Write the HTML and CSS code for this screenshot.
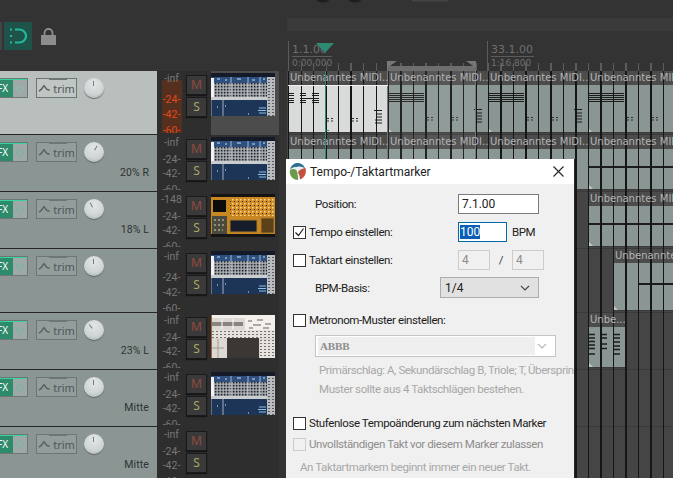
FILE: index.html
```html
<!DOCTYPE html>
<html lang="de">
<head>
    <meta charset="UTF-8">
    <meta name="viewport" content="width=device-width, initial-scale=1.0">
    <title>Tempo-/Taktartmarker</title>
    <link rel="stylesheet" href="styles.css">
</head>
<body>
    <!-- Shared drawings -->
    <svg class="defs" aria-hidden="true">
        <defs>
            <pattern id="dots" width="3" height="3" patternUnits="userSpaceOnUse">
                <rect width="3" height="3" fill="#aeb3b8"/>
                <rect x=".8" y=".8" width="1.700" height="1.700" fill="#1e2127"/>
            </pattern>
            <pattern id="side" width="4" height="3" patternUnits="userSpaceOnUse">
                <rect width="4" height="3" fill="#b9bdc0"/>
                <rect x="1" width="2" height="1" fill="#555a62"/>
            </pattern>
            <pattern id="gold" width="4" height="4" patternUnits="userSpaceOnUse">
                <rect width="4" height="4" fill="#cf8a24"/>
                <rect x="1" y="1" width="1.500" height="1.500" fill="#f5dfa8"/>
                <rect x="3" y="3" width="1" height="1" fill="#4a300c"/>
            </pattern>
            <pattern id="pale" width="4" height="3" patternUnits="userSpaceOnUse">
                <rect width="4" height="3" fill="#e6e2de"/>
                <rect x="1" y="1" width="2" height="1" fill="#77716e"/>
            </pattern>
            <symbol id="rack" viewBox="0 0 64 43">
                <rect width="64" height="43" fill="#1d3557"/>
                <rect width="64" height="4" fill="#141a28"/>
                <rect y="4" width="64" height="6" fill="#2d5080"/>
                <path d="M6 6h3M14 7h2M26 6h4M41 7h3M52 6h2" stroke="#cfe0f0"/>
                <rect y="10" width="56" height="14" fill="url(#dots)"/>
                <rect y="5" width="3" height="20" fill="#f2f2f2"/>
                <path d="M20 4v21M37 4v21M49 4v21" stroke="#dfe5ec" stroke-width=".7"/>
                <rect y="24" width="64" height="3" fill="#c9cdd0"/>
                <rect x="56" y="4" width="8" height="39" fill="url(#side)"/>
                <path d="M0 27v16M12 27v16" stroke="#c5ced8" stroke-width=".8"/>
                <path d="M48 35h7M47 37.500h8M48 40h7" stroke="#8fc1e8"/>
                <path d="M6 34h1M37 41h1M14 33h1" stroke="#e6edf3"/>
            </symbol>
            <symbol id="amber" viewBox="0 0 64 43">
                <rect width="64" height="43" fill="#141414"/>
                <rect y="3" width="64" height="37" fill="#c98722"/>
                <rect x="19" y="4" width="44" height="18" fill="url(#gold)"/>
                <rect x="2" y="6" width="13" height="12" fill="#0c0c0c"/>
                <rect x="1" y="22" width="15" height="18" fill="#4a4a3e"/>
                <path d="M3 26h10M3 31h11M3 36h9" stroke="#e0d3a8" stroke-dasharray="2 2"/>
                <rect x="19" y="26" width="27" height="12" fill="#161c2a" stroke="#a87a2c"/>
                <rect x="50" y="24" width="13" height="15" fill="#5c4018" stroke="#a87a2c"/>
            </symbol>
            <symbol id="paper" viewBox="0 0 64 43">
                <rect width="64" height="43" fill="#dcd8d4"/>
                <rect width="64" height="3" fill="#f3f0ec"/>
                <rect y="7" width="32" height="4" fill="#8a8480"/>
                <path d="M11 4v10M22 4v10" stroke="#fff"/>
                <rect x="34" y="3" width="30" height="14" fill="#f3f0ec"/>
                <path d="M37 6h4M46 5h6M42 10h8M54 9h6M38 13h4M52 13h6" stroke="#66605c"/>
                <rect y="15" width="64" height="8" fill="url(#pale)"/>
                <rect x="16" y="23" width="32" height="20" fill="#3a3735"/>
                <path d="M7 24v19M1 33h12" stroke="#a49c96"/>
                <rect x="49" y="25" width="15" height="18" fill="url(#pale)"/>
                <rect width="1" height="43" fill="#b0602c"/>
            </symbol>
            <symbol id="power" viewBox="0 0 12 12">
                <path d="M3.600 3.500a4 4 0 1 0 4.800 0M6 1.500v4.500" fill="none" stroke-width="1.200"/>
            </symbol>
            <symbol id="notes-first" viewBox="0 0 100 48">
                <path d="M0 7.500h6M0 9.500h6M0 12.500h6M0 14.500h6M0 16.500h6M12 7.500h6M12 9.500h6M12 12.500h12M12 14.500h6M12 16.500h6M24 7.500h7M24 9.500h7M24 12.500h7M24 14.500h7M24 16.500h7" stroke="#1c1c1c"/>
                <path d="M39 32.500h2M43 32.500h2M39 35h2M43 35h2M64 32.500h2M68 32.500h2M64 35h2M68 35h2" stroke="#333" stroke-width="1.200"/>
                <path d="M86 24.500h8M88 28h6M88 31h6M87 34h7M87 37h7" stroke="#1c1c1c"/>
            </symbol>
            <symbol id="notes-rest" viewBox="0 0 100 48">
                <path d="M0 8.500h36M0 10.500h36M0 12.500h36M0 14.500h36M0 16.500h36" stroke="#1c1c1c"/>
                <path d="M39 32.500h2M43 32.500h2M39 35h2M43 35h2M64 32.500h2M68 32.500h2M64 35h2M68 35h2" stroke="#333" stroke-width="1.200"/>
                <path d="M86 24.500h8M88 28h6M88 31h6M87 34h7M87 37h7" stroke="#1c1c1c"/>
            </symbol>
            <symbol id="notes-short" viewBox="0 0 37 40">
                <path d="M0 7.500h7M0 11h7M0 14.500h7M0 18h7M0 21.500h7M0 27h7M13 7.500h6M13 11h6M13 17h6M13 21.500h6M26 7.500h6M26 11h6M26 15h6M26 19h6M26 22.500h6M25 27h7" stroke="#1c1c1c" stroke-width="1.300"/>
            </symbol>
        </defs>
    </svg>

    <div class="top">
        <div class="tools">
            <div class="tool-edge"></div>
            <div class="snap">
                <svg width="18" height="18" viewBox="0 0 18 18">
                    <path d="M6 2.500h4.500a6.500 6.500 0 0 1 0 13H6" fill="none" stroke="#22b89a" stroke-width="2.200"/>
                    <path d="M1 2.500h2M1 9h2M1 15.500h2" stroke="#22b89a" stroke-width="2.200"/>
                </svg>
            </div>
            <svg class="lock" width="15" height="17" viewBox="0 0 15 17">
                <path d="M3.500 8V5a4 4 0 0 1 8 0v3" fill="none" stroke="#8d8d8d" stroke-width="1.800"/>
                <rect y="7" width="15" height="10" fill="#8d8d8d"/>
            </svg>
        </div>
        <div class="ruler">
            <svg class="scraps" width="170" height="4" viewBox="0 0 170 4">
                <ellipse cx="36" cy="0" rx="6" ry="2.500" fill="#1e1e1e"/>
                <ellipse cx="68" cy="0" rx="6" ry="2.500" fill="#1e1e1e"/>
                <rect x="125" width="36" height="1.500" fill="#454545"/>
            </svg>
            <div class="ruler-band"></div>
            <div class="ruler-ticks"></div>
            <div class="bar-mark bar-first"><span class="bar-num">1.1.00</span><span class="bar-time">0:00.000</span></div>
            <div class="bar-mark bar-next"><span class="bar-num">33.1.00</span><span class="bar-time">1:16.800</span></div>
            <div class="loop"></div>
            <svg class="playhead-top" width="18" height="10" viewBox="0 0 18 10"><path d="M0 0h18l-9 10z" fill="#2e8a72"/></svg>
        </div>
    </div>

    <div class="main">
        <div class="tracks">
            <div class="track tall">
                <div class="panel selected">
                    <div class="controls">
                        <div class="fx"><span class="fx-label">FX</span><span class="fx-power"><svg width="10" height="10"><use href="#power"/></svg></span></div>
                        <div class="trim"><svg width="13" height="10" viewBox="0 0 14 10"><path d="M1 8.500l2.500-2 3-4 3 4 3 1" fill="none" stroke="#5a5f5f" stroke-width="1.600"/></svg><span>trim</span></div>
                        <div class="knob"></div>
                    </div>
                </div>
                <div class="meter hot"><span>-inf</span><span class="m24">-24-</span><span>-42-</span><span>-60-</span></div>
                <div class="buttons"><div class="mute">M</div><div class="solo">S</div></div>
                <div class="thumb thumb-active"><svg width="64" height="43"><use href="#rack"/></svg></div>
            </div>
            <div class="track">
                <div class="panel">
                    <div class="controls">
                        <div class="fx"><span class="fx-label">FX</span><span class="fx-power"><svg width="10" height="10"><use href="#power"/></svg></span></div>
                        <div class="trim"><svg width="13" height="10" viewBox="0 0 14 10"><path d="M1 8.500l2.500-2 3-4 3 4 3 1" fill="none" stroke="#5a5f5f" stroke-width="1.600"/></svg><span>trim</span></div>
                        <div class="knob knob-r20"></div>
                    </div>
                    <div class="pan">20% R</div>
                </div>
                <div class="meter"><span>-inf</span><span class="m24">-24-</span><span>-42-</span><span>-60-</span></div>
                <div class="buttons"><div class="mute">M</div><div class="solo">S</div></div>
                <div class="thumb"><svg width="64" height="43"><use href="#rack"/></svg></div>
            </div>
            <div class="track">
                <div class="panel">
                    <div class="controls">
                        <div class="fx"><span class="fx-label">FX</span><span class="fx-power"><svg width="10" height="10"><use href="#power"/></svg></span></div>
                        <div class="trim"><svg width="13" height="10" viewBox="0 0 14 10"><path d="M1 8.500l2.500-2 3-4 3 4 3 1" fill="none" stroke="#5a5f5f" stroke-width="1.600"/></svg><span>trim</span></div>
                        <div class="knob knob-l18"></div>
                    </div>
                    <div class="pan">18% L</div>
                </div>
                <div class="meter"><span>-148</span><span class="m24">-24-</span><span>-42-</span><span>-60-</span></div>
                <div class="buttons"><div class="mute">M</div><div class="solo">S</div></div>
                <div class="thumb"><svg width="64" height="43"><use href="#amber"/></svg></div>
            </div>
            <div class="track tall">
                <div class="panel">
                    <div class="controls">
                        <div class="fx"><span class="fx-label">FX</span><span class="fx-power"><svg width="10" height="10"><use href="#power"/></svg></span></div>
                        <div class="trim"><svg width="13" height="10" viewBox="0 0 14 10"><path d="M1 8.500l2.500-2 3-4 3 4 3 1" fill="none" stroke="#5a5f5f" stroke-width="1.600"/></svg><span>trim</span></div>
                        <div class="knob"></div>
                    </div>
                </div>
                <div class="meter"><span>-inf</span><span class="m24">-24-</span><span>-42-</span><span>-60-</span></div>
                <div class="buttons"><div class="mute">M</div><div class="solo">S</div></div>
                <div class="thumb"><svg width="64" height="43"><use href="#rack"/></svg></div>
            </div>
            <div class="track">
                <div class="panel">
                    <div class="controls">
                        <div class="fx"><span class="fx-label">FX</span><span class="fx-power"><svg width="10" height="10"><use href="#power"/></svg></span></div>
                        <div class="trim"><svg width="13" height="10" viewBox="0 0 14 10"><path d="M1 8.500l2.500-2 3-4 3 4 3 1" fill="none" stroke="#5a5f5f" stroke-width="1.600"/></svg><span>trim</span></div>
                        <div class="knob knob-l23"></div>
                    </div>
                    <div class="pan">23% L</div>
                </div>
                <div class="meter"><span>-inf</span><span class="m24">-24-</span><span>-42-</span><span>-60-</span></div>
                <div class="buttons"><div class="mute">M</div><div class="solo">S</div></div>
                <div class="thumb"><svg width="64" height="43"><use href="#paper"/></svg></div>
            </div>
            <div class="track">
                <div class="panel">
                    <div class="controls">
                        <div class="fx"><span class="fx-label">FX</span><span class="fx-power"><svg width="10" height="10"><use href="#power"/></svg></span></div>
                        <div class="trim"><svg width="13" height="10" viewBox="0 0 14 10"><path d="M1 8.500l2.500-2 3-4 3 4 3 1" fill="none" stroke="#5a5f5f" stroke-width="1.600"/></svg><span>trim</span></div>
                        <div class="knob"></div>
                    </div>
                    <div class="pan">Mitte</div>
                </div>
                <div class="meter"><span>-inf</span><span class="m24">-24-</span><span>-42-</span><span>-60-</span></div>
                <div class="buttons"><div class="mute">M</div><div class="solo">S</div></div>
                <div class="thumb"><svg width="64" height="43"><use href="#rack"/></svg></div>
            </div>
            <div class="track">
                <div class="panel">
                    <div class="controls">
                        <div class="fx"><span class="fx-label">FX</span><span class="fx-power"><svg width="10" height="10"><use href="#power"/></svg></span></div>
                        <div class="trim"><svg width="13" height="10" viewBox="0 0 14 10"><path d="M1 8.500l2.500-2 3-4 3 4 3 1" fill="none" stroke="#5a5f5f" stroke-width="1.600"/></svg><span>trim</span></div>
                        <div class="knob"></div>
                    </div>
                    <div class="pan">Mitte</div>
                </div>
                <div class="meter"><span>-inf</span><span class="m24">-24-</span><span>-42-</span><span>-60-</span></div>
                <div class="buttons"><div class="mute">M</div><div class="solo">S</div></div>
                <div class="thumb"></div>
            </div>
        </div>

        <!-- Arrange view: items sit on the timeline -->
        <div class="arrange">
            <div class="lane tall">
                <div class="item item-1 picked"><div class="item-title">Unbenanntes MIDI...</div><div class="item-body"><svg width="100" height="48"><use href="#notes-first"/></svg></div></div>
                <div class="item item-2"><div class="item-title">Unbenanntes MIDI...</div><div class="item-body"><svg width="100" height="48"><use href="#notes-rest"/></svg></div></div>
                <div class="item item-3"><div class="item-title">Unbenanntes MIDI...</div><div class="item-body"><svg width="100" height="48"><use href="#notes-rest"/></svg></div></div>
                <div class="item item-4"><div class="item-title">Unbenanntes MIDI...</div><div class="item-body"><svg width="100" height="48"><use href="#notes-rest"/></svg></div></div>
            </div>
            <div class="lane">
                <div class="item item-1"><div class="item-title">Unbenanntes MIDI...</div><div class="item-body"></div></div>
                <div class="item item-2"><div class="item-title">Unbenanntes MIDI...</div><div class="item-body"></div></div>
                <div class="item item-3"><div class="item-title">Unbenanntes MIDI...</div><div class="item-body"></div></div>
                <div class="item item-4"><div class="item-title">Unbenanntes MIDI...</div><div class="item-body"><div class="held held-2"></div></div></div>
            </div>
            <div class="lane">
                <div class="item item-4"><div class="item-title">Unbenanntes MIDI...</div><div class="item-body"><div class="held held-3"></div></div></div>
            </div>
            <div class="lane tall">
                <div class="item item-5"><div class="item-title">Unbenanntes MIDI...</div><div class="item-body"><div class="held held-4"></div></div></div>
            </div>
            <div class="lane">
                <div class="item item-6"><div class="item-title">Unbe...</div><div class="item-body"><svg width="37" height="40"><use href="#notes-short"/></svg></div></div>
            </div>
            <div class="lane"></div>
            <div class="lane"></div>
            <div class="beat-lines"></div>
            <div class="time-selection"></div>
            <div class="playhead"></div>
        </div>
    </div>

    <div class="dialog">
        <div class="dialog-title">
            <svg class="logo" width="17" height="17" viewBox="0 0 17 17">
                <circle cx="8.500" cy="8.500" r="8.500" fill="#e9eef0"/>
                <path d="M1 6.500C2.500 1.500 6 0 8.500 0s6.500 1.500 7.800 6C13.500 3.500 10 3 8 4 5 4 3 4.500 1 6.500z" fill="#2d6f8c"/>
                <path d="M1 7c2.500-1.500 5-1.500 6.500.5 1 2 1.500 5.500 1.500 9.500-4 0-7.500-3-8-7z" fill="#6b9a4a"/>
                <path d="M9 9.500c.5-2 3-4 7.500-4.500.800 4 .5 9-5.500 11.500 0-2-.5-5-2-7z" fill="#c2503c"/>
            </svg>
            <span class="title-text">Tempo-/Taktartmarker</span>
            <svg class="close" width="11" height="11" viewBox="0 0 11 11"><path d="M.5.500l10 10M10.500.500l-10 10" stroke="#222" stroke-width="1.100"/></svg>
        </div>
        <div class="dialog-body">
            <div class="row row-position">
                <span class="label label-plain wide">Position:</span>
                <div class="field field-wide">7.1.00</div>
            </div>
            <div class="row row-tempo">
                <span class="check checked"><svg width="11" height="11" viewBox="0 0 11 11"><path d="M1.500 5.500l3 3 5-7" fill="none" stroke="#222" stroke-width="1.200"/></svg></span>
                <span class="label wide-check">Tempo einstellen:</span>
                <div class="field field-tempo"><span class="selection">100</span></div>
                <span class="unit">BPM</span>
            </div>
            <div class="row row-meter">
                <span class="check"></span>
                <span class="label wide-check">Taktart einstellen:</span>
                <div class="field field-small off">4</div>
                <span class="slash">/</span>
                <div class="field field-small off">4</div>
            </div>
            <div class="row row-base">
                <span class="label label-plain narrow">BPM-Basis:</span>
                <div class="select">1/4<svg width="10" height="6" viewBox="0 0 10 6"><path d="M1 1l4 4 4-4" fill="none" stroke="#444" stroke-width="1.100"/></svg></div>
            </div>
            <div class="row row-pattern">
                <span class="check"></span>
                <span class="label">Metronom-Muster einstellen:</span>
            </div>
            <div class="combo">
                <span class="combo-text">ABBB</span>
                <svg width="10" height="6" viewBox="0 0 10 6"><path d="M1 1l4 4 4-4" fill="none" stroke="#b5b5b5" stroke-width="1.100"/></svg>
            </div>
            <div class="hint">Primärschlag: A, Sekundärschlag B, Triole; T, Überspringen: .</div>
            <div class="hint">Muster sollte aus 4 Taktschlägen bestehen.</div>
            <div class="row row-ramp">
                <span class="check"></span>
                <span class="label">Stufenlose Tempoänderung zum nächsten Marker</span>
            </div>
            <div class="row row-partial">
                <span class="check off"></span>
                <span class="label off-text">Unvollständigen Takt vor diesem Marker zulassen</span>
            </div>
            <div class="note">An Taktartmarkern beginnt immer ein neuer Takt.</div>
        </div>
    </div>
</body>
</html>
```

FILE: styles.css
```css
/* General */
body {
    margin: 0;
    width: 673px;
    height: 478px;
    overflow: hidden;
    position: relative;
    background-color: #333;
    font-family: "DejaVu Sans", sans-serif;
    color: #222;
}

.defs {
    position: absolute;
    width: 0;
    height: 0;
}

/* Top area */
.top {
    display: flex;
    height: 71px;
}

.tools {
    width: 287px;
    display: flex;
    align-items: flex-start;
    padding-top: 22px;
    box-sizing: border-box;
}

.tool-edge {
    width: 2px;
    height: 28px;
    background-color: #444;
    margin-right: 2px;
}

.snap {
    width: 28px;
    height: 28px;
    background-color: #1f5248;
    display: flex;
    justify-content: center;
    align-items: center;
}

.lock {
    margin: 6px 0 0 9px;
}

.ruler {
    flex: 1;
    position: relative;
}

.scraps {
    position: absolute;
    left: 0;
    top: 0;
}

.ruler-band {
    margin-top: 18px;
    height: 13px;
    background-color: #3a3a3a;
}

.ruler-ticks {
    position: absolute;
    left: 1px;
    right: 0;
    top: 63px;
    height: 8px;
    background: repeating-linear-gradient(90deg, #5c5c5c 0, #5c5c5c 1px, transparent 1px, transparent 12.5px);
}

.bar-mark {
    position: absolute;
    top: 41px;
    height: 30px;
    padding-left: 3px;
    border-left: 1px solid #5c5c5c;
    display: flex;
    flex-direction: column;
    color: #707070;
}

.bar-first { left: 1px; }
.bar-next { left: 200px; }

.bar-num {
    font-size: 11px;
    line-height: 13px;
    border-bottom: 1px solid #5c5c5c;
    padding-right: 1px;
    margin-top: 2px;
}

.bar-time {
    font-size: 9px;
    line-height: 13px;
}

.loop {
    position: absolute;
    left: 100px;
    top: 66px;
    width: 89px;
    height: 5px;
    background-color: #6e6e6e;
}

.loop::before,
.loop::after {
    content: "";
    position: absolute;
    top: -5px;
    width: 0;
    height: 0;
    border-top: 7px solid #777;
}

.loop::before {
    left: 0;
    border-right: 10px solid transparent;
}

.loop::after {
    right: 0;
    border-left: 10px solid transparent;
}

.playhead-top {
    position: absolute;
    left: 29px;
    top: 43px;
}

/* Main split */
.main {
    display: flex;
    height: 407px;
}

.tracks {
    width: 287px;
}

.track {
    display: flex;
    height: 57px;
}

.track.tall {
    height: 64px;
}

.panel {
    width: 157px;
    box-sizing: border-box;
    background-color: #8b9694;
    border-bottom: 1px solid #262626;
    overflow: hidden;
}

.panel.selected {
    background-color: #b8bfbd;
}

.controls {
    display: flex;
    padding-top: 7px;
}

/* FX button */
.fx {
    width: 28px;
    height: 20px;
    box-sizing: border-box;
    display: flex;
    border: 1px solid #6d7674;
    border-left: none;
}

.fx-label {
    width: 13px;
    background-color: #2d8a6b;
    box-shadow: inset 0 1px 0 #38d39f;
    color: #fff;
    font-family: "Noto Sans", sans-serif;
    font-size: 10px;
    line-height: 19px;
    text-indent: -3px;
    white-space: nowrap;
    overflow: hidden;
}

.fx-power {
    flex: 1;
    background-color: #9ea9a7;
    box-shadow: inset 0 1px 0 #38d39f;
    display: flex;
    justify-content: center;
    align-items: center;
}

.fx-power svg {
    stroke: #6fb8a2;
}

.selected .fx-power svg {
    stroke: #8fbfaf;
}

/* Trim button */
.trim {
    width: 41px;
    height: 20px;
    margin-left: 8px;
    box-sizing: border-box;
    border: 1px solid #6d7674;
    background-color: #939e9c;
    display: flex;
    align-items: center;
    justify-content: center;
    gap: 2px;
    font-family: "Noto Sans", sans-serif;
    font-size: 11px;
    color: #50565a;
    position: relative;
}

.trim::before {
    content: "";
    position: absolute;
    top: -1px;
    left: 12px;
    width: 18px;
    height: 2px;
    background-color: #6d7674;
}

.selected .trim {
    background-color: #bfc6c4;
}

/* Pan knob */
.knob {
    width: 20px;
    height: 20px;
    margin-left: 7px;
    border-radius: 50%;
    background: radial-gradient(circle at 50% 30%, #e2e6e6 0, #cfd4d4 60%, #a4aaa9 100%);
    box-shadow: 0 1px 1px #5f6665;
    position: relative;
}

.knob::after {
    content: "";
    position: absolute;
    left: 9px;
    top: 3px;
    width: 1px;
    height: 5px;
    background-color: #767b7b;
    transform-origin: 50% 7px;
}

.knob-r20::after { transform: rotate(30deg); }
.knob-l18::after { transform: rotate(-28deg); }
.knob-l23::after { transform: rotate(-38deg); }

.pan {
    margin-top: 4px;
    padding-right: 8px;
    text-align: right;
    font-family: "Roboto", sans-serif;
    font-size: 10.5px;
    letter-spacing: 0.1px;
    line-height: 14px;
    color: #2e3232;
}

/* Meter labels */
.meter {
    width: 29px;
    background-color: #2e2e2e;
    color: #777;
    font-family: "Roboto", sans-serif;
    font-size: 10.5px;
    text-align: center;
    overflow: hidden;
    display: flex;
    flex-direction: column;
    padding-top: 1px;
    box-sizing: border-box;
}

.meter span {
    line-height: 14px;
    height: 14px;
    flex-shrink: 0;
}

.meter .m24 {
    margin-top: 3px;
}

.meter span:last-child {
    margin-top: 2px;
    height: 7px;
    overflow: hidden;
}

.tall .meter .m24 {
    margin-top: 7px;
}

.tall .meter span:nth-child(3) {
    margin-top: 1px;
}

.tall .meter span:last-child {
    height: 9px;
}

.meter.hot {
    color: #e0491b;
    background:
        linear-gradient(#56301f, #56301f) 5px 9px / 20px 53px no-repeat,
        #2e2e2e;
}

.meter.hot span:first-child {
    color: #777;
}

/* Mute and solo */
.buttons {
    width: 25px;
    background-color: #2e2e2e;
    padding-top: 4px;
    box-sizing: border-box;
}

.mute,
.solo {
    width: 21px;
    height: 20px;
    box-sizing: border-box;
    border: 1px solid #1a1a1a;
    background-color: #3a3a3a;
    box-shadow: 0 1px 1px #161616;
    text-align: center;
    font-family: "Noto Sans", sans-serif;
    font-size: 12px;
    line-height: 18px;
}

.mute {
    color: #8f4a40;
}

.solo {
    margin-top: 2px;
    color: #a8a860;
}

/* FX thumbnails */
.thumb {
    width: 68px;
    background-color: #2e2e2e;
    padding: 2px 0 0 0;
    box-sizing: border-box;
    line-height: 0;
}

.thumb-active {
    background-color: #4c4c4c;
}

/* Arrange view */
.arrange {
    flex: 1;
    position: relative;
    background-color: #454545;
    overflow: hidden;
}

.lane {
    height: 57px;
    position: relative;
    box-sizing: border-box;
    border-bottom: 1px solid #3a3a3a;
}

.lane.tall {
    height: 64px;
}

.item {
    position: absolute;
    top: 0;
    bottom: 1px;
    display: flex;
    flex-direction: column;
    overflow: hidden;
    background-color: #4c4c4c;
    border-bottom: 1px solid #3a3a3a;
}

.item-1 { left: 1px; width: 100px; }
.item-2 { left: 101px; width: 100px; }
.item-3 { left: 201px; width: 100px; }
.item-4 { left: 301px; width: 100px; }
.item-5 { left: 326px; width: 60px; }
.item-6 { left: 301px; width: 37px; }

.item-title {
    height: 14px;
    flex-shrink: 0;
    color: #b4b4b4;
    font-size: 10px;
    line-height: 14px;
    padding-left: 2px;
    white-space: nowrap;
    position: relative;
    z-index: 2;
}

.item-body {
    flex: 1;
    background-color: #8a9694;
    position: relative;
}

.item-body::after {
    content: "";
    position: absolute;
    left: 0;
    bottom: 0;
    width: 0;
    height: 0;
    border-bottom: 5px solid #c4cac8;
    border-right: 5px solid transparent;
}

.item-body svg {
    display: block;
}

.picked .item-body {
    background-color: #d8dbd9;
}

.picked .item-title {
    border-bottom: 1px solid #f2f2f2;
}

.held {
    position: absolute;
    height: 2px;
    background-color: #1c1c1c;
    left: 0;
    right: 0;
}

.held-2 { top: 17px; }
.held-3 { top: 17px; }
.held-4 { top: 20px; left: 25px; }

.beat-lines {
    position: absolute;
    left: 1px;
    right: 0;
    top: 0;
    bottom: 0;
    z-index: 1;
    background: repeating-linear-gradient(90deg, #161616 0, #161616 1px, transparent 1px, transparent 12.5px);
}

.time-selection {
    position: absolute;
    left: 100px;
    top: 0;
    width: 89px;
    height: 90px;
    z-index: 1;
    background-color: rgba(255, 255, 255, 0.06);
    border-left: 1px solid #777;
    border-right: 1px solid #777;
    box-sizing: border-box;
}

.playhead {
    position: absolute;
    left: 38px;
    top: -19px;
    width: 1px;
    height: 110px;
    z-index: 2;
    background-color: #2e8a72;
}

.playhead::after {
    content: "";
    position: absolute;
    left: 0;
    top: 78px;
    width: 4px;
    height: 1px;
    background-color: #2e8a72;
}

/* Dialog */
.dialog {
    position: absolute;
    left: 286px;
    top: 159px;
    width: 289px;
    height: 319px;
    box-sizing: border-box;
    background-color: #f0f0f0;
    border-right: 1px solid #2a2a2a;
    font-family: "Roboto", sans-serif;
    font-size: 11.5px;
    letter-spacing: -0.4px;
    overflow: hidden;
    z-index: 3;
}

.dialog-title {
    height: 25px;
    background-color: #fff;
    display: flex;
    align-items: center;
    padding-left: 3px;
}

.title-text {
    margin-left: 4px;
    font-size: 12px;
    letter-spacing: 0;
}

.close {
    margin-left: auto;
    margin-right: 10px;
}

.dialog-body {
    padding-top: 10px;
}

.row {
    display: flex;
    align-items: center;
    padding-left: 7px;
}

.row-position { height: 20px; }
.row-tempo { height: 20px; margin-top: 8px; }
.row-meter { height: 20px; margin-top: 8px; }
.row-base { height: 21px; margin-top: 7px; }
.row-pattern { height: 16px; margin-top: 14px; }
.row-ramp { height: 16px; margin-top: 16px; }
.row-partial { height: 16px; margin-top: 5px; }

.check {
    width: 13px;
    height: 13px;
    box-sizing: border-box;
    border: 1px solid #333;
    background-color: #fff;
    display: flex;
    align-items: center;
    justify-content: center;
    margin-right: 3px;
    flex-shrink: 0;
}

.check.off {
    border-color: #ccc;
    background-color: #f0f0f0;
}

.label {
    white-space: nowrap;
    color: #1c1c1c;
}

.off-text {
    color: #8d8d8d;
}

.label-plain {
    padding-left: 22px;
    box-sizing: border-box;
}

.wide { width: 165px; }
.narrow { width: 147px; }
.wide-check { width: 149px; }

.field {
    height: 100%;
    box-sizing: border-box;
    border: 1px solid #7a7a7a;
    background-color: #fff;
    padding: 0 0 0 3px;
    font-size: 12px;
    letter-spacing: 0;
    line-height: 18px;
}

.field-wide { width: 81px; }

.field-tempo {
    width: 49px;
    border-color: #0067a8;
    padding-left: 1px;
}

.selection {
    background-color: #0a5fb4;
    color: #fff;
}

.unit {
    margin-left: 5px;
}

.field-small {
    width: 32px;
}

.field.off {
    background-color: #f0f0f0;
    border-color: #ccc;
    color: #8d8d8d;
}

.slash {
    width: 22px;
    text-align: center;
    color: #444;
}

.select {
    width: 99px;
    height: 100%;
    box-sizing: border-box;
    border: 1px solid #adadad;
    background-color: #e1e1e1;
    display: flex;
    align-items: center;
    justify-content: space-between;
    padding: 0 8px 0 4px;
    font-size: 12px;
    letter-spacing: 0;
}

.combo {
    width: 241px;
    height: 22px;
    margin: 7px 0 0 29px;
    box-sizing: border-box;
    border: 1px solid #c4c4c4;
    background-color: #fff;
    display: flex;
    align-items: center;
    justify-content: space-between;
    padding-right: 8px;
}

.combo-text {
    width: 217px;
    height: 18px;
    margin-left: 2px;
    padding-left: 2px;
    box-sizing: border-box;
    background-color: #efefef;
    font-family: "Liberation Serif", serif;
    font-weight: bold;
    font-size: 11px;
    letter-spacing: -0.1px;
    line-height: 18px;
    color: #8d8d8d;
}

.hint {
    height: 19px;
    line-height: 19px;
    margin-left: 33px;
    color: #a8a8a8;
    white-space: nowrap;
}

.combo + .hint {
    margin-top: 4px;
}

.note {
    height: 16px;
    line-height: 16px;
    margin: 7px 0 0 14px;
    color: #a8a8a8;
    white-space: nowrap;
}
```
